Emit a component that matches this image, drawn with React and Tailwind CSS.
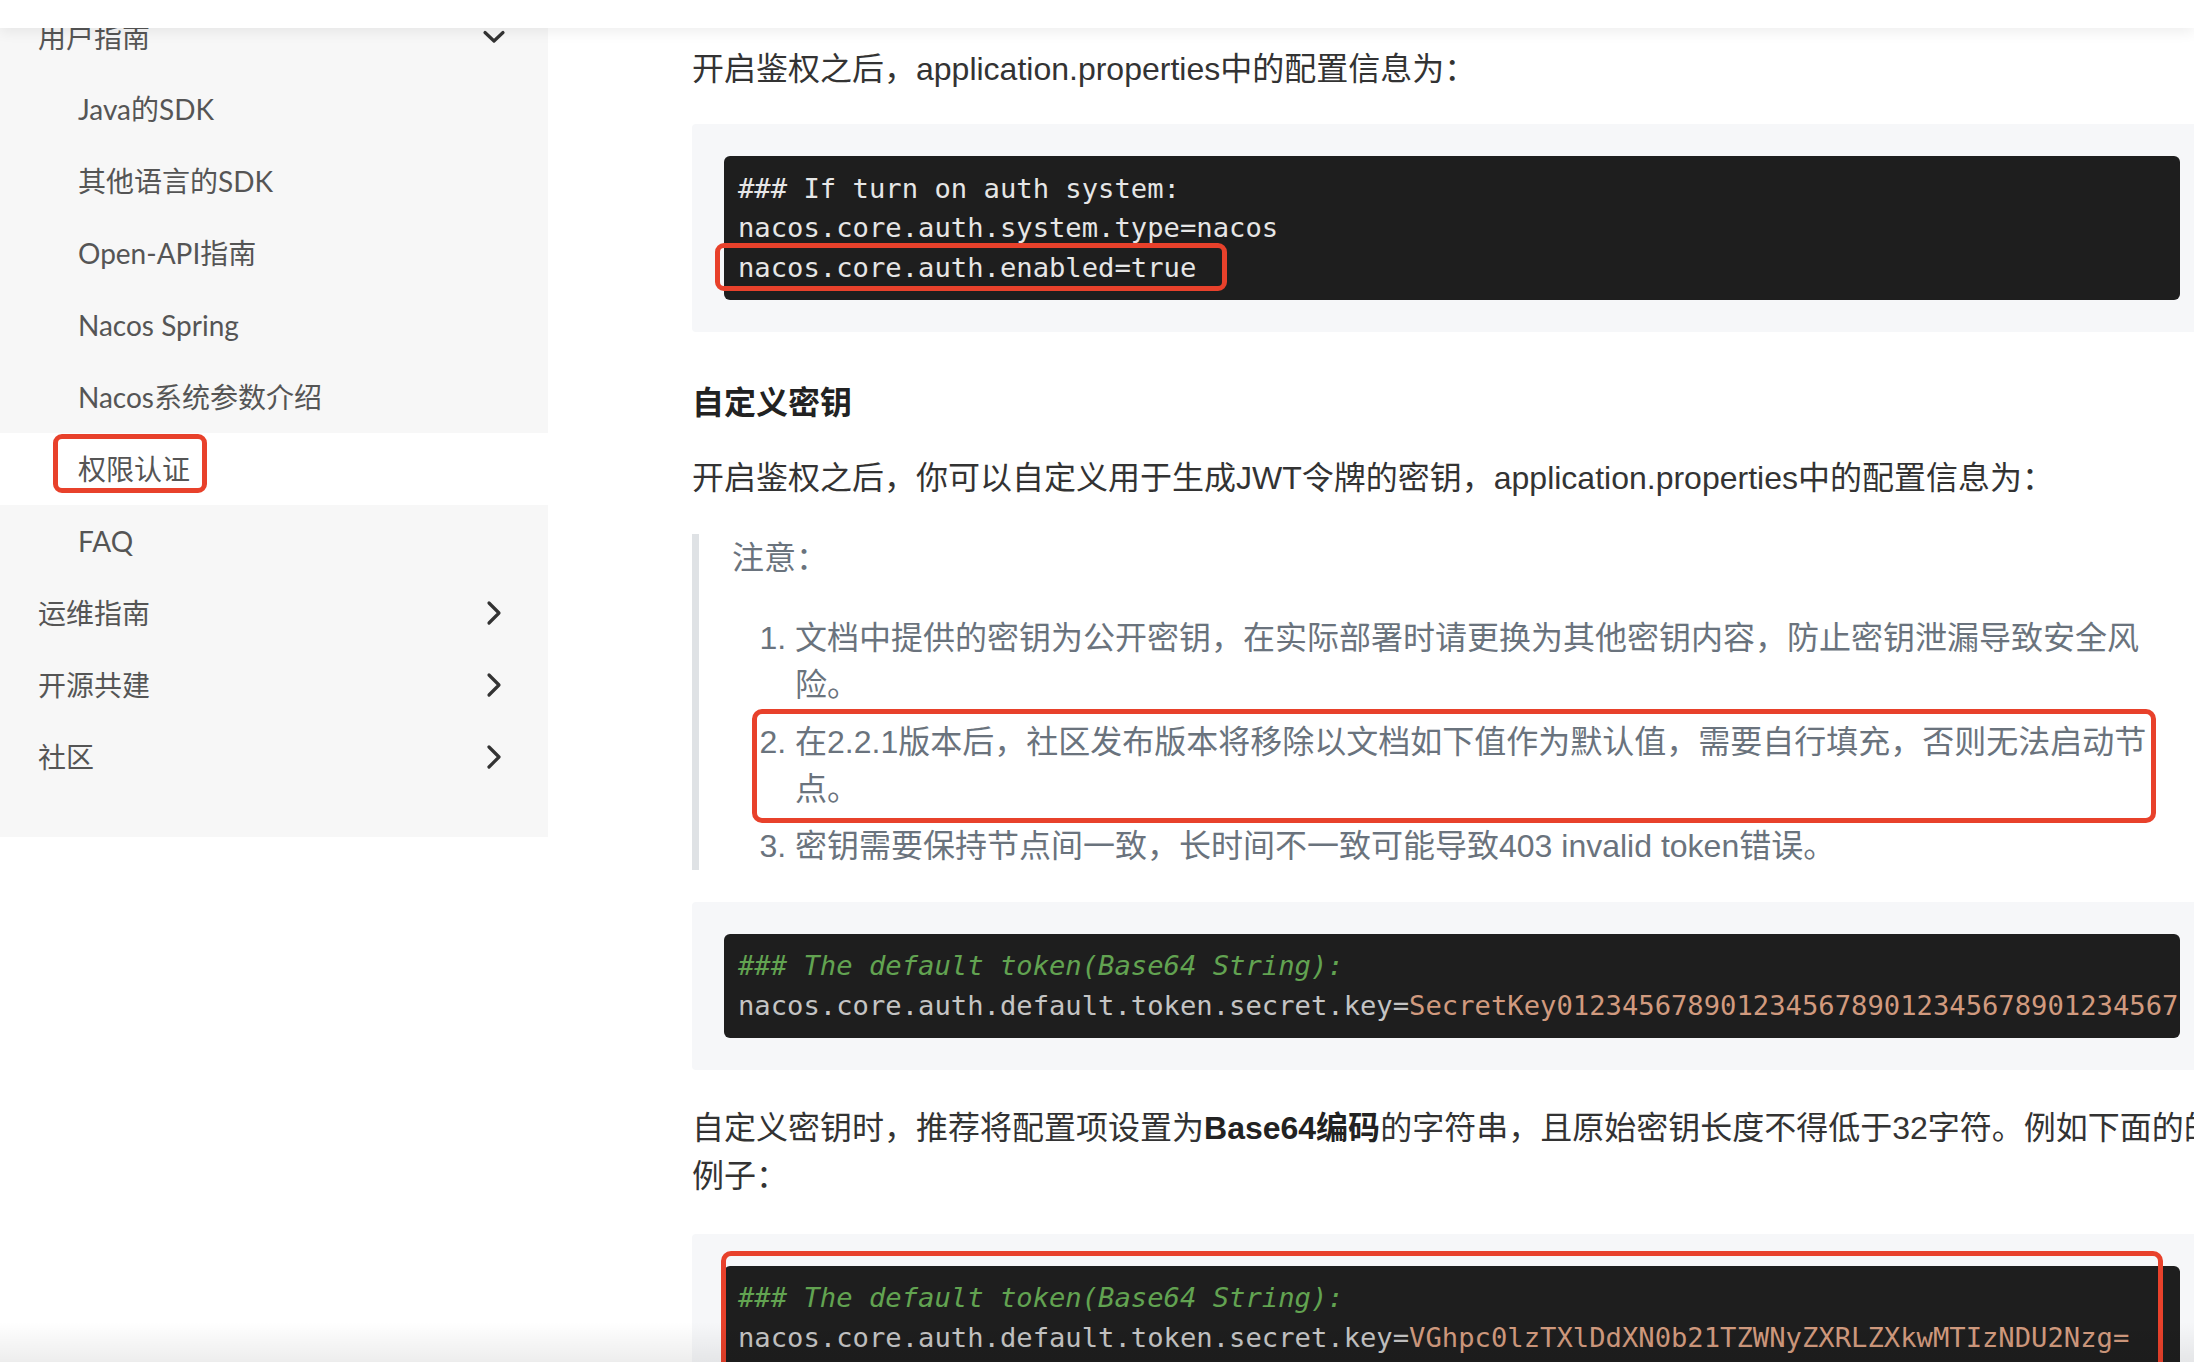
import React from 'react';

const sidebarItems = [
  { label: '用户指南', level: 0, chevron: 'down' },
  { label: 'Java的SDK', level: 1 },
  { label: '其他语言的SDK', level: 1 },
  { label: 'Open-API指南', level: 1 },
  { label: 'Nacos Spring', level: 1 },
  { label: 'Nacos系统参数介绍', level: 1 },
  { label: '权限认证', level: 1, active: true },
  { label: 'FAQ', level: 1 },
  { label: '运维指南', level: 0, chevron: 'right' },
  { label: '开源共建', level: 0, chevron: 'right' },
  { label: '社区', level: 0, chevron: 'right' }
];

function ChevronDown() {
  return (
    <svg width="24" height="14" viewBox="0 0 24 14" fill="none">
      <path d="M3 2.5 L12 11 L21 2.5" stroke="#333" strokeWidth="3.2" strokeLinecap="round" strokeLinejoin="round" />
    </svg>
  );
}

function ChevronRight() {
  return (
    <svg width="24" height="26" viewBox="0 0 24 26" fill="none">
      <path d="M7 3 L17 13 L7 23" stroke="#333" strokeWidth="3.2" strokeLinecap="round" strokeLinejoin="round" />
    </svg>
  );
}

function Sidebar() {
  return (
    <aside className="w-[548px] shrink-0 self-start bg-[#f7f7f7] pt-[1px] pb-[44px] font-['Lato','Noto_Sans_CJK_SC',sans-serif] text-[28px] text-[#555]">
      {sidebarItems.map(item => (
        <div
          key={item.label}
          className={
            'relative flex h-[72px] items-center justify-between pr-[42px] ' +
            (item.level === 0 ? 'pl-[38px] ' : 'pl-[78px] ') +
            (item.active ? 'bg-white' : '')
          }
        >
          <span>{item.label}</span>
          {item.chevron === 'down' && <ChevronDown />}
          {item.chevron === 'right' && <ChevronRight />}
          {item.active && (
            <div className="pointer-events-none absolute left-[53px] top-[1px] h-[59px] w-[154px] rounded-[9px] border-[5px] border-[#e8412b]" />
          )}
        </div>
      ))}
    </aside>
  );
}

function CodeBlock({ children, highlight, markLine, className = 'mt-8' }) {
  return (
    <div className={'rounded-[4px] bg-[#f6f7f9] p-8 ' + className}>
      <div className="relative rounded-md bg-[#1e1e1e]">
        <div className="overflow-hidden rounded-md py-[12.5px] pl-[14px] font-['DejaVu_Sans_Mono',monospace] text-[27.2px] leading-[39.5px] whitespace-pre">
          {children}
        </div>

        {/* annotation around the third line */}
        {markLine && (
          <div className="pointer-events-none absolute -left-[9px] top-[87px] h-[48px] w-[512px] rounded-[9px] border-[5px] border-[#e8412b]" />
        )}

        {/* annotation around the whole block */}
        {highlight && (
          <div className="pointer-events-none absolute -left-[3px] -top-[15px] right-[17px] -bottom-[15px] rounded-[10px] border-[5px] border-[#e8412b]" />
        )}
      </div>
    </div>
  );
}

export default function App() {
  return (
    <div className="relative h-[1362px] w-[2194px] overflow-hidden bg-white font-['Liberation_Sans','Noto_Sans_CJK_SC',sans-serif]">

      <div className="flex">
        <Sidebar />

        {/* Content */}

        <main className="ml-[144px] w-[1520px] shrink-0 pt-[45px] text-[32px] leading-[48px] text-[#333]">

          <p>开启鉴权之后，application.properties中的配置信息为：</p>

          <CodeBlock markLine className="mt-[31px]">
            <div className="text-[#e6e6e6]">### If turn on auth system:</div>
            <div className="text-[#e6e6e6]">nacos.core.auth.system.type=nacos</div>
            <div className="text-[#e6e6e6]">nacos.core.auth.enabled=true</div>
          </CodeBlock>

          <h3 className="mt-[47px] font-bold text-[#222]">自定义密钥</h3>

          <p className="mt-[27px]">
            开启鉴权之后，你可以自定义用于生成JWT令牌的密钥，application.properties中的配置信息为：
          </p>

          <blockquote className="mt-8 border-l-[7px] border-[#dfe2e5] pl-[33px] pr-[50px] text-[#6a737d]">
            <p>注意：</p>
            <ol className="mt-[33px] list-decimal pl-[63px] leading-[47px]">
              <li>文档中提供的密钥为公开密钥，在实际部署时请更换为其他密钥内容，防止密钥泄漏导致安全风险。</li>
              <li className="relative mt-[10px]">
                在2.2.1版本后，社区发布版本将移除以文档如下值作为默认值，需要自行填充，否则无法启动节点。
                <div className="pointer-events-none absolute -left-[43px] -top-[10px] right-[6px] -bottom-[10px] rounded-[10px] border-[5px] border-[#e8412b]" />
              </li>
              <li className="mt-[10px]">密钥需要保持节点间一致，长时间不一致可能导致403 invalid token错误。</li>
            </ol>
          </blockquote>

          <CodeBlock>
            <div className="italic text-[#62a351]">### The default token(Base64 String):</div>
            <div className="text-[#c4c4c4]">
              nacos.core.auth.default.token.secret.key=
              <span className="text-[#d19a7e]">SecretKey012345678901234567890123456789012345678901234567890123456789</span>
            </div>
          </CodeBlock>

          <p className="mt-[34px] w-[1545px]">
            自定义密钥时，推荐将配置项设置为<strong className="font-bold text-[#222]">Base64编码</strong>的字符串，且原始密钥长度不得低于32字符。例如下面的的例子：
          </p>

          <CodeBlock highlight className="mt-[34px]">
            <div className="italic text-[#62a351]">### The default token(Base64 String):</div>
            <div className="text-[#c4c4c4]">
              nacos.core.auth.default.token.secret.key=
              <span className="text-[#d19a7e]">VGhpc0lzTXlDdXN0b21TZWNyZXRLZXkwMTIzNDU2Nzg=</span>
            </div>
          </CodeBlock>

        </main>
      </div>

      {/* Top bar */}
      <div className="absolute inset-x-0 top-0 z-10 h-[28px] bg-white shadow-[0_4px_14px_rgba(0,0,0,0.07)]" />

      {/* Bottom fade */}
      <div className="pointer-events-none absolute inset-x-0 bottom-0 h-[40px] bg-linear-to-t from-[rgba(0,0,0,0.07)] to-transparent" />
    </div>
  );
}
